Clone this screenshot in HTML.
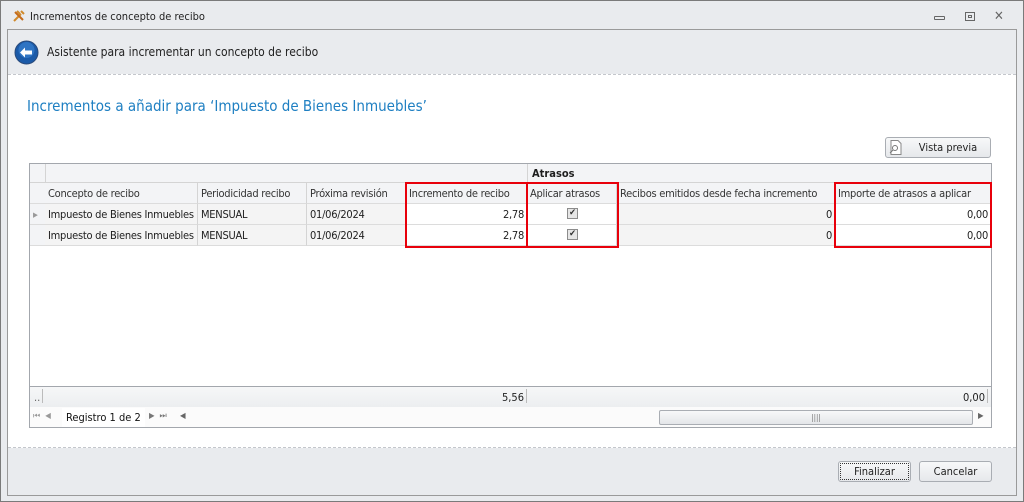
<!DOCTYPE html>
<html><head><meta charset="utf-8"><style>
*{margin:0;padding:0;box-sizing:border-box}
body{width:1024px;height:502px;position:relative;background:#e9ebee;font-family:Tahoma,"DejaVu Sans Condensed","Liberation Sans",sans-serif;font-size:11px;color:#1e1e1e;overflow:hidden}
.a{position:absolute}
.win{left:0;top:0;width:1024px;height:502px;border:1px solid #7a7a7a}
.inner{left:7px;top:29px;width:1010px;height:467px;border:1px solid #9a9a9a;background:#e9ebee}
.cell{position:absolute;height:21px;line-height:22px;padding:0 2px 0 3px;white-space:nowrap;overflow:hidden;border-right:1px solid #d4d4d4;border-bottom:1px solid #dcdcdc;letter-spacing:-0.25px}
.hd{background:#f3f4f6;color:#333}
.g{background:#f4f4f4}
.w{background:#fff}
.r{text-align:right}
.red{position:absolute;border:2px solid #e8000b}
.btn{position:absolute;border:1px solid #a9adb3;border-radius:3px;background:linear-gradient(#f7f8f9,#e6e8eb);text-align:center;line-height:19px;color:#222}
.chk{position:absolute;width:11px;height:11px;border:1px solid #8c8c8c;background:#e6e6e6;font-size:9px;line-height:9px;text-align:center;color:#333}
</style></head><body>
<div class="a win"></div>
<svg class="a" style="left:12px;top:9px" width="14" height="14" viewBox="0 0 14 14"><path d="M2 12L9 5M5 2l3 3M9 2l3 3" stroke="#d08a2c" stroke-width="2" fill="none"/><path d="M3 3l8 8" stroke="#c46a1a" stroke-width="2"/></svg>
<div class="a" style="left:30px;top:10px;font-size:11px">Incrementos de concepto de recibo</div>
<div class="a" style="left:934px;top:16px;width:11px;height:4px;border:1px solid #666;border-radius:1px"></div>
<div class="a" style="left:965px;top:12px;width:10px;height:9px;border:1px solid #666"><div style="margin:2px;height:3px;border:1px solid #666"></div></div>
<div class="a" style="left:994px;top:9px;font-size:13px;color:#666">✕</div>
<div class="a inner"></div>
<svg class="a" style="left:14px;top:40px" width="25" height="25" viewBox="0 0 25 25"><circle cx="12.5" cy="12.5" r="11.5" fill="#1b5aa8" stroke="#2a4a7a"/><circle cx="12.5" cy="10" r="8" fill="#3d86d6" opacity=".6"/><path d="M6 12.5l5-5v3h7v4h-7v3z" fill="#fff"/></svg>
<div class="a" style="left:47px;top:45px;font-size:12px;color:#222">Asistente para incrementar un concepto de recibo</div>
<div class="a" style="left:8px;top:74px;width:1008px;height:374px;background:#fff;border-top:1px dashed #c4c7cc;border-bottom:1px dashed #c4c7cc"></div>
<div class="a" style="left:27px;top:97px;font-size:15px;color:#1e7fc2">Incrementos a añadir para ‘Impuesto de Bienes Inmuebles’</div>
<div class="btn" style="left:885px;top:137px;width:106px;height:21px;padding-left:20px">Vista previa</div>
<svg class="a" style="left:889px;top:140px" width="14" height="15"><path d="M2 .5h7l3 3v11H2z" fill="#fff" stroke="#888"/><circle cx="6" cy="8" r="2.5" fill="none" stroke="#777"/><path d="M4 10l-3 3" stroke="#777"/></svg>
<div class="a" style="left:29px;top:163px;width:963px;height:265px;border:1px solid #a3a7ad;background:#fff"></div>
<div class="a hd" style="left:30px;top:164px;width:961px;height:19px;border-bottom:1px solid #d4d4d4"></div>
<div class="a" style="left:45px;top:164px;width:1px;height:19px;background:#d4d4d4"></div>
<div class="a" style="left:527px;top:164px;width:1px;height:19px;background:#d4d4d4"></div>
<div class="a" style="left:532px;top:167px;font-weight:bold">Atrasos</div>
<div class="cell hd" style="left:30px;top:183px;width:16px"></div>
<div class="cell hd" style="left:45px;top:183px;width:153px">Concepto de recibo</div>
<div class="cell hd" style="left:198px;top:183px;width:109px">Periodicidad recibo</div>
<div class="cell hd" style="left:307px;top:183px;width:99px">Próxima revisión</div>
<div class="cell hd" style="left:406px;top:183px;width:121px">Incremento de recibo</div>
<div class="cell hd" style="left:527px;top:183px;width:90px">Aplicar atrasos</div>
<div class="cell hd" style="left:617px;top:183px;width:218px">Recibos emitidos desde fecha incremento</div>
<div class="cell hd" style="left:835px;top:183px;width:156px">Importe de atrasos a aplicar</div>

<div class="cell hd" style="left:30px;top:204px;width:16px;color:#999;font-size:7px">▶</div>
<div class="cell g" style="left:45px;top:204px;width:153px">Impuesto de Bienes Inmuebles</div>
<div class="cell g" style="left:198px;top:204px;width:109px">MENSUAL</div>
<div class="cell g" style="left:307px;top:204px;width:99px">01/06/2024</div>
<div class="cell w r" style="left:406px;top:204px;width:121px">2,78</div>
<div class="cell w" style="left:527px;top:204px;width:90px"></div>
<div class="cell g r" style="left:617px;top:204px;width:218px">0</div>
<div class="cell w r" style="left:835px;top:204px;width:156px">0,00</div>

<div class="cell hd" style="left:30px;top:225px;width:16px"></div>
<div class="cell g" style="left:45px;top:225px;width:153px">Impuesto de Bienes Inmuebles</div>
<div class="cell g" style="left:198px;top:225px;width:109px">MENSUAL</div>
<div class="cell g" style="left:307px;top:225px;width:99px">01/06/2024</div>
<div class="cell w r" style="left:406px;top:225px;width:121px">2,78</div>
<div class="cell w" style="left:527px;top:225px;width:90px"></div>
<div class="cell g r" style="left:617px;top:225px;width:218px">0</div>
<div class="cell w r" style="left:835px;top:225px;width:156px">0,00</div>
<div class="chk" style="left:567px;top:208px">✔</div>
<div class="chk" style="left:567px;top:229px">✔</div>
<div class="red" style="left:405px;top:182px;width:123px;height:66px"></div>
<div class="red" style="left:526px;top:182px;width:93px;height:66px"></div>
<div class="red" style="left:834px;top:182px;width:158px;height:66px"></div>

<div class="a" style="left:30px;top:386px;width:961px;height:21px;background:linear-gradient(#f6f7f8,#eceef0);border-top:1px solid #a3a7ad"></div>
<div class="a" style="left:34px;top:391px;color:#666">..</div>
<div class="a" style="left:42px;top:389px;width:1px;height:14px;background:#bbb"></div>
<div class="a" style="left:502px;top:391px">5,56</div>
<div class="a" style="left:526px;top:389px;width:1px;height:14px;background:#bbb"></div>
<div class="a" style="left:963px;top:391px">0,00</div>
<div class="a" style="left:987px;top:389px;width:1px;height:14px;background:#bbb"></div>
<div class="a" style="left:30px;top:407px;width:961px;height:20px;background:#fbfbfb"></div>
<div class="a" style="left:33px;top:411px;color:#999;font-size:8px;letter-spacing:5px">⏮◀</div>
<div class="a" style="left:62px;top:408px;width:83px;height:19px;background:#fff;line-height:19px;padding-left:4px;color:#111">Registro 1 de 2</div>
<div class="a" style="left:149px;top:411px;color:#777;font-size:8px;letter-spacing:5px">▶⏭</div>
<div class="a" style="left:180px;top:411px;color:#666;font-size:8px">◀</div>
<div class="a" style="left:659px;top:410px;width:314px;height:15px;border:1px solid #a9adb3;border-radius:2px;background:linear-gradient(#f7f8f9,#e4e6e9);text-align:center;line-height:13px;font-size:8px;color:#777">||||</div>
<div class="a" style="left:978px;top:411px;color:#666;font-size:8px">▶</div>

<div class="btn" style="left:838px;top:461px;width:73px;height:21px;outline:1px dotted #333;outline-offset:-3px">Finalizar</div>
<div class="btn" style="left:919px;top:461px;width:73px;height:21px">Cancelar</div>
</body></html>
